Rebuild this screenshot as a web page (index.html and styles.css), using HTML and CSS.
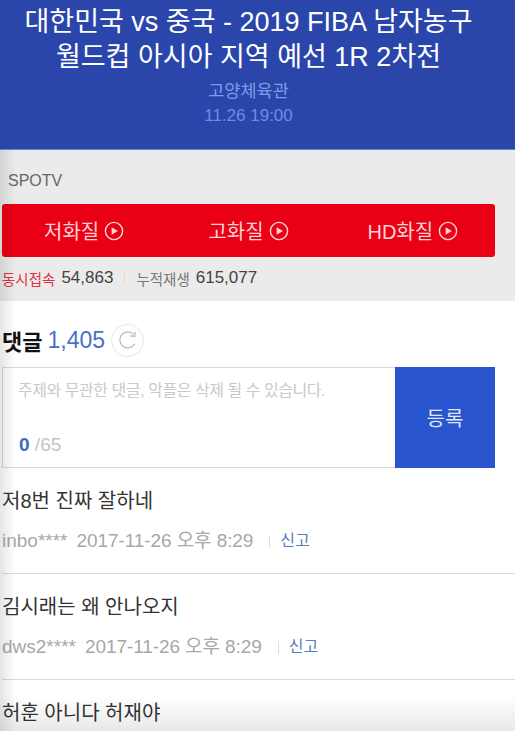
FILE: index.html
```html
<!DOCTYPE html>
<html lang="ko">
<head>
  <meta charset="UTF-8">
  <meta name="viewport" content="width=device-width, initial-scale=1.0">
  <title>대한민국 vs 중국</title>
  <link rel="stylesheet" href="styles.css">
</head>
<body>
  <div class="page">
    <header class="match">
      <h1>대한민국 vs 중국 - 2019 FIBA 남자농구<br>월드컵 아시아 지역 예선 1R 2차전</h1>
      <p class="place">고양체육관</p>
      <p class="time">11.26 19:00</p>
    </header>

    <section class="live">
      <p class="channel">SPOTV</p>
      <div class="quality">
        <a class="q-btn">저화질
          <svg class="play" viewBox="0 0 20 20"><circle cx="10" cy="10" r="8.6" fill="none" stroke="currentColor" stroke-width="1.4"/><path d="M7.6 6.2 14 10 7.6 13.8Z" fill="currentColor"/></svg>
        </a>
        <a class="q-btn">고화질
          <svg class="play" viewBox="0 0 20 20"><circle cx="10" cy="10" r="8.6" fill="none" stroke="currentColor" stroke-width="1.4"/><path d="M7.6 6.2 14 10 7.6 13.8Z" fill="currentColor"/></svg>
        </a>
        <a class="q-btn">HD화질
          <svg class="play" viewBox="0 0 20 20"><circle cx="10" cy="10" r="8.6" fill="none" stroke="currentColor" stroke-width="1.4"/><path d="M7.6 6.2 14 10 7.6 13.8Z" fill="currentColor"/></svg>
        </a>
      </div>
      <p class="stats">
        <span class="now">동시접속</span>
        <b>54,863</b>
        <span class="sep"></span>
        <span class="total">누적재생</span>
        <b>615,077</b>
      </p>
    </section>

    <section class="comments">
      <div class="c-head">
        <h2>댓글</h2>
        <span class="count">1,405</span>
        <span class="refresh">
          <svg viewBox="0 0 22 22"><path d="M17.8 14.8A8 8 0 1 1 16.6 5.4" fill="none" stroke="currentColor" stroke-width="1.2"/><path d="M18.2 2.8 17.8 7.4 13.2 6.8" fill="none" stroke="currentColor" stroke-width="1.2"/></svg>
        </span>
      </div>

      <form class="c-form">
        <div class="c-input">
          <p class="hint">주제와 무관한 댓글, 악플은 삭제 될 수 있습니다.</p>
          <p class="limit"><b>0</b> /65</p>
        </div>
        <button type="button" class="submit">등록</button>
      </form>

      <ul class="c-list">
        <li>
          <p class="c-text">저8번 진짜 잘하네</p>
          <p class="c-meta"><span class="c-user">inbo****</span><span class="c-date">2017-11-26 오후 8:29</span><span class="bar"></span><a class="report">신고</a></p>
        </li>
        <li>
          <p class="c-text">김시래는 왜 안나오지</p>
          <p class="c-meta"><span class="c-user">dws2****</span><span class="c-date">2017-11-26 오후 8:29</span><span class="bar"></span><a class="report">신고</a></p>
        </li>
        <li>
          <p class="c-text">허훈 아니다 허재야</p>
        </li>
      </ul>
    </section>
    <div class="shade-left"></div>
    <div class="shade-bottom"></div>
  </div>
</body>
</html>
```

FILE: styles.css
```css
html, body {
  margin: 0;
  padding: 0;
}
body {
  font-family: "Liberation Sans", "Noto Sans CJK KR", sans-serif;
  background-color: #fff;
}
p, h1, h2, ul {
  margin: 0;
  padding: 0;
}
.page {
  position: relative;
  height: 731px;
  overflow: hidden;
}
.match {
  height: 150px;
  padding: 5px 18px 0 0;
  box-sizing: border-box;
  background-color: #2a46ab;
  border-bottom: 1px solid #6b7fd0;
  text-align: center;
}
.match h1 {
  font-size: 27px;
  line-height: 35px;
  font-weight: 400;
  white-space: nowrap;
  color: #fff;
}
.place {
  margin-top: 4px;
  font-size: 17.5px;
  line-height: 24px;
  color: #7f9be8;
}
.time {
  font-size: 17px;
  line-height: 26px;
  color: #6f8ce0;
}
.live {
  height: 151px;
  background-color: #ebebeb;
  box-sizing: border-box;
  padding: 21px 0 0 2px;
}
.channel {
  padding-left: 6px;
  font-size: 16px;
  line-height: 20px;
  color: #666;
}
.quality {
  display: flex;
  width: 493px;
  height: 53px;
  margin-top: 13px;
  background-color: #ea0014;
  border-radius: 3px;
}
.q-btn {
  flex: 1;
  display: flex;
  align-items: center;
  justify-content: center;
  gap: 5px;
  font-size: 20px;
  color: #fbd3d6;
}
.play {
  width: 20px;
  height: 20px;
}
.stats {
  display: flex;
  align-items: center;
  margin-top: 12px;
  height: 18px;
  font-size: 17px;
  color: #444;
  gap: 6px;
}
.stats b {
  font-weight: 400;
}
.now {
  font-size: 14.5px;
  color: #e0333f;
}
.total {
  font-size: 14.5px;
  color: #777;
}
.sep {
  width: 1px;
  height: 13px;
  margin: 0 5px;
  background-color: #ddd;
}
.comments {
  padding: 0 20px 0 2px;
}
.c-head {
  display: flex;
  align-items: center;
  height: 34px;
  margin-top: 22px;
  gap: 5px;
}
.c-head h2 {
  font-size: 22px;
  font-weight: 700;
  color: #111;
}
.count {
  font-size: 23px;
  color: #4a70c8;
}
.refresh {
  display: flex;
  align-items: center;
  justify-content: center;
  width: 33px;
  height: 33px;
  margin-left: 1px;
  box-sizing: border-box;
  border: 1px solid #e6e6e6;
  border-radius: 50%;
  color: #b5b5b5;
}
.refresh svg {
  width: 22px;
  height: 22px;
}
.c-form {
  display: flex;
  height: 101px;
  margin-top: 10px;
}
.c-input {
  flex: 1;
  display: flex;
  flex-direction: column;
  justify-content: space-between;
  box-sizing: border-box;
  padding: 9px 0 11px 15px;
  border: 1px solid #d8d8d8;
  border-right: none;
}
.hint {
  font-size: 16px;
  letter-spacing: -0.45px;
  color: #c9c9c9;
}
.limit {
  padding-left: 1px;
  font-size: 19px;
  color: #c4c4c4;
}
.limit b {
  color: #3f68c4;
}
.submit {
  width: 100px;
  border: none;
  padding: 0;
  background-color: #2855cd;
  color: #dfe6f8;
  font-family: inherit;
  font-size: 20px;
}
.c-list {
  list-style: none;
  margin-right: -20px;
  margin-left: -2px;
  padding-left: 2px;
}
.c-list li {
  height: 106px;
  box-sizing: border-box;
  border-bottom: 1px solid #d9d9d9;
  padding-top: 20px;
}
.c-text {
  font-size: 20px;
  line-height: 27px;
  color: #333;
}
.c-meta {
  display: flex;
  align-items: center;
  margin-top: 14px;
  font-size: 19px;
  line-height: 24px;
  color: #a8a8a8;
  white-space: pre;
}
.c-user {
  margin-right: 9px;
}
.c-date {
  letter-spacing: -0.08px;
}
.bar {
  width: 1px;
  height: 13px;
  margin: 0 10px 0 16px;
  background-color: #ddd;
}
.report {
  font-size: 16px;
  color: #5a7cc0;
}
.shade-left {
  position: absolute;
  top: 150px;
  left: 0;
  bottom: 0;
  width: 16px;
  background: linear-gradient(to right, rgba(0, 0, 0, 0.1), rgba(0, 0, 0, 0));
}
.shade-bottom {
  position: absolute;
  left: 0;
  right: 0;
  bottom: 0;
  height: 35px;
  background: linear-gradient(to bottom, rgba(0, 0, 0, 0), rgba(0, 0, 0, 0.09));
}
```
